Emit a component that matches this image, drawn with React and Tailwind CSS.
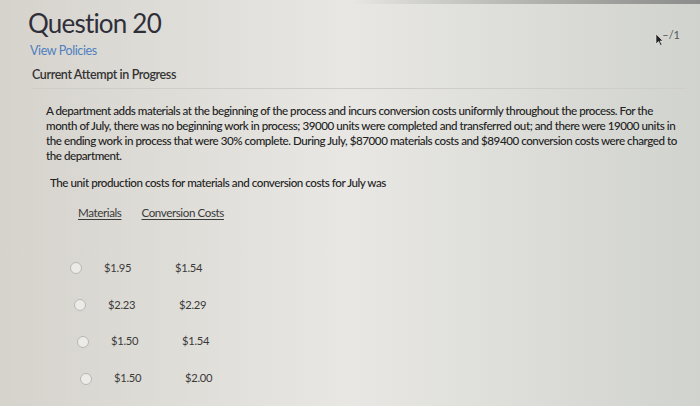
import React from "react";

const options = [
  { m: "$1.95", c: "$1.54", shift: "ml-[70px]" },
  { m: "$2.23", c: "$2.29", shift: "ml-[74px]" },
  { m: "$1.50", c: "$1.54", shift: "ml-[77px]" },
  { m: "$1.50", c: "$2.00", shift: "ml-[80px]" },
];

const App = () => {
  return (
    <div className="relative w-[700px] h-[406px] overflow-hidden bg-linear-to-r from-[#d6d3cd] via-[#e8e7e3] to-[#d1d3ce] font-['Lato','Noto_Sans',sans-serif] text-[#333]">
      <div className="h-[4px] bg-linear-to-r from-transparent via-transparent to-[#8c8c8a]" />

      <div className="relative pl-[28px] pr-[14px]">
        <h1 className="text-[26px] leading-[30px] text-[#2f2f3a] mt-[4px] tracking-[-0.8px]">Question 20</h1>
        <div className="text-[12.5px] text-[#4f7fbf] mt-[4px] pl-[2px] tracking-[-0.4px]">View Policies</div>
        <div className="text-[12.5px] text-[#333] font-semibold mt-[5px] pl-[4px] tracking-[-0.4px]">Current Attempt in Progress</div>
        <div className="ml-[4px] mt-[3px] border-t border-[#cfcdc8]" />

        <div className="absolute right-[20px] top-[19px] text-[11px] text-[#555]">
          <span className="relative">
            <svg className="absolute -left-[7px] top-[5px]" width="9" height="13" viewBox="0 0 9 13">
              <path d="M1 1 L1 11 L3.5 8.5 L5.5 12.5 L7 11.8 L5 8 L8 8 Z" fill="#222" stroke="#eee" strokeWidth="0.6" />
            </svg>
            –/1
          </span>
        </div>
      </div>

      <div className="pl-[46px] pr-[20px] mt-[14px]">
        <p className="text-[11.6px] leading-[15px] text-[#222] font-medium tracking-[-0.45px]">
          A department adds materials at the beginning of the process and incurs conversion costs uniformly throughout the process. For the month of July, there was no beginning work in process; 39000 units were completed and transferred out; and there were 19000 units in the ending work in process that were 30% complete. During July, $87000 materials costs and $89400 conversion costs were charged to the department.
        </p>
        <p className="text-[11.6px] leading-[15px] text-[#222] font-medium mt-[12px] pl-[4px] tracking-[-0.45px]">
          The unit production costs for materials and conversion costs for July was
        </p>
        <div className="flex text-[11.6px] text-[#3a3a3a] mt-[14px] pl-[32px] tracking-[-0.4px]">
          <span className="underline underline-offset-2">Materials</span>
          <span className="underline underline-offset-2 ml-[20px]">Conversion Costs</span>
        </div>
      </div>

      <div className="mt-[39px] flex flex-col gap-[20px]">
        {options.map((o, i) => (
          <div key={i} className={`flex items-center text-[11.2px] text-[#3a3a3a] tracking-[-0.3px] ${o.shift}`}>
            <span className="w-[12px] h-[12px] rounded-full border border-[#b8b8b4] bg-[#ecebe7]" />
            <span className="ml-[22px] w-[49px]">{o.m}</span>
            <span className="ml-[22px]">{o.c}</span>
          </div>
        ))}
      </div>
    </div>
  );
};

export default App;
